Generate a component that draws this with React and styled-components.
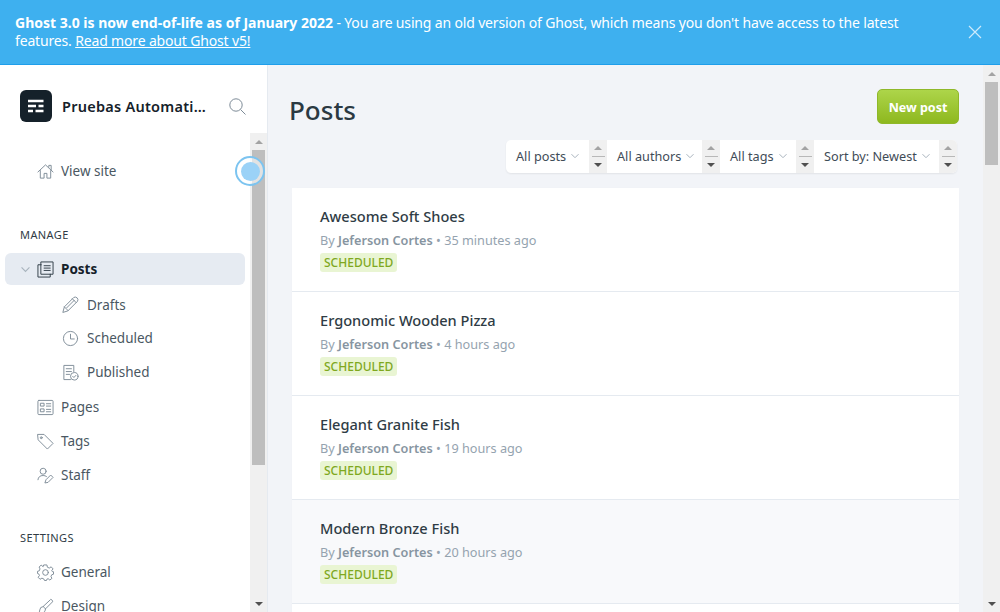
import React from 'react';
import styled, { createGlobalStyle } from 'styled-components';

const GlobalStyle = createGlobalStyle`
  html, body {
    margin: 0;
    padding: 0;
    height: 100%;
    overflow: hidden;
    background: #fff;
    font-family: "Noto Sans", "Open Sans", sans-serif;
  }
  #root { height: 100%; }
  * { box-sizing: border-box; }
`;

const Page = styled.div`
  width: 1000px;
  height: 612px;
  display: flex;
  flex-direction: column;
  overflow: hidden;
`;

const Banner = styled.div`
  height: 65px;
  flex: none;
  display: flex;
  align-items: flex-start;
  justify-content: space-between;
  padding: 14px 18px 0 15px;
  background: #3eb0ef;
  border-bottom: 1px solid #1f9eea;
  color: #fff;
  font-size: 14px;
  line-height: 18px;
`;

const BannerText = styled.div`
  width: 930px;
  letter-spacing: -0.16px;
  b { font-weight: 700; letter-spacing: 0; }
  a { color: #fff; text-decoration: underline; }
`;

const CloseButton = styled.svg`
  width: 14px;
  height: 14px;
  margin-top: 11px;
`;

const Body = styled.div`
  flex: 1;
  min-height: 0;
  display: flex;
`;

const Sidebar = styled.aside`
  width: 268px;
  flex: none;
  display: flex;
  flex-direction: column;
  background: #fff;
  border-right: 1px solid #e5eaf0;
  position: relative;
`;

const SideHeader = styled.div`
  height: 68px;
  flex: none;
  display: flex;
  align-items: flex-start;
  padding: 25px 20px 0 20px;
`;

const Logo = styled.svg`
  width: 32px;
  height: 32px;
  flex: none;
`;

const SiteName = styled.div`
  margin-left: 10px;
  width: 148px;
  font-size: 14.5px;
  line-height: 32px;
  font-weight: 600;
  letter-spacing: 0.25px;
  color: #15212a;
  white-space: nowrap;
  overflow: hidden;
  text-overflow: ellipsis;
`;

const SearchIcon = styled.svg`
  width: 17px;
  height: 17px;
  margin: 8px 0 0 19px;
  flex: none;
`;

const SideBody = styled.div`
  flex: 1;
  min-height: 0;
  display: flex;
`;

const Nav = styled.nav`
  flex: 1;
  min-width: 0;
  overflow: hidden;
  padding: 21px 5px 0 5px;
`;

const SectionLabel = styled.div`
  margin: ${({ $top }) => $top}px 0 0 15px;
  font-size: 11px;
  line-height: 16px;
  letter-spacing: 0.4px;
  color: #2f3b45;
  text-transform: uppercase;
`;

const NavRow = styled.div`
  display: flex;
  align-items: center;
  height: ${({ $h }) => $h || 34}px;
  margin-top: ${({ $top }) => $top || 0}px;
  padding-left: ${({ $sub }) => ($sub ? 57 : 32)}px;
  border-radius: 6px;
  font-size: 13.5px;
  color: #4a5762;
  ${({ $active }) =>
    $active &&
    `
    background: #e6ebf2;
    padding-left: 16px;
    color: #15212a;
    font-weight: 700;
  `}
  svg { flex: none; }
  svg + svg { margin-left: 7px; }
`;

const RowLabel = styled.span`
  margin-left: ${({ $gap }) => $gap || 7}px;
  letter-spacing: 0;
`;

const Track = styled.div`
  flex: none;
  width: 17px;
  display: flex;
  flex-direction: column;
  background: #f0f0f0;
`;

const TrackButton = styled.div`
  height: 17px;
  flex: none;
  display: flex;
  align-items: center;
  justify-content: center;
`;

const Arrow = styled.span`
  width: 0;
  height: 0;
  border-left: 4px solid transparent;
  border-right: 4px solid transparent;
  ${({ $dir, $dim }) =>
    $dir === 'up'
      ? `border-bottom: 4px solid ${$dim ? '#a3a3a3' : '#505050'};`
      : `border-top: 4px solid ${$dim ? '#a3a3a3' : '#505050'};`}
`;

const Thumb = styled.div`
  height: ${({ $h }) => $h}px;
  flex: none;
  background: #bebebe;
  margin: 0 2px;
`;

const TrackFill = styled.div`
  flex: 1;
`;

const Hotspot = styled.div`
  position: absolute;
  left: 235px;
  top: 91px;
  width: 30px;
  height: 30px;
  border-radius: 50%;
  border: 2px solid #7cc4f0;
  background: rgba(255, 255, 255, 0.55);
  display: flex;
  align-items: center;
  justify-content: center;
  &::after {
    content: '';
    width: 19px;
    height: 19px;
    border-radius: 50%;
    background: #9bd2f7;
  }
`;

const Main = styled.main`
  flex: 1;
  min-width: 0;
  display: flex;
  background: #f2f4f8;
`;

const Content = styled.div`
  flex: 1;
  min-width: 0;
  overflow: hidden;
  padding: 24px 24px 0 21px;
`;

const TitleRow = styled.div`
  display: flex;
  justify-content: space-between;
  align-items: flex-start;
`;

const Title = styled.h1`
  margin: 0;
  font-size: 26px;
  line-height: 42px;
  font-weight: 500;
  color: #2b3942;
`;

const NewButton = styled.button`
  width: 82px;
  height: 35px;
  padding: 1px 0 0 0;
  border: 1px solid #8fb82a;
  border-radius: 5px;
  background: linear-gradient(#add54a, #8eb81f);
  color: #fff;
  font-family: inherit;
  font-size: 12.5px;
  font-weight: 700;
`;

const Filters = styled.div`
  display: flex;
  justify-content: flex-end;
  margin: 9px 2px 0 0;
`;

const FilterBar = styled.div`
  display: flex;
  height: 33px;
  background: #fff;
  border-radius: 5px;
  overflow: hidden;
  box-shadow: 0 1px 2px rgba(0, 0, 0, 0.07);
`;

const Filter = styled.div`
  width: ${({ $w }) => $w}px;
  display: flex;
  align-items: center;
  padding: 0 0 2px 10px;
  font-size: 12.7px;
  color: #3f4c57;
  white-space: nowrap;
  svg { margin-left: 5px; }
`;

const Spin = styled.div`
  width: 18px;
  flex: none;
  display: flex;
  flex-direction: column;
  align-items: center;
  justify-content: center;
  background: #f0f0f0;
`;

const SpinPart = styled.div`
  height: 16px;
  width: 13px;
  display: flex;
  align-items: center;
  justify-content: center;
  ${({ $line }) => $line && 'border-bottom: 1px solid #b8b8b8;'}
`;

const PostList = styled.div`
  margin: 15px 0 0 3px;
  background: #fff;
  border-radius: 6px 6px 0 0;
  box-shadow: 0 0 1px rgba(0, 0, 0, 0.05);
`;

const PostRow = styled.div`
  height: 104px;
  padding: 18px 28px 0 28px;
  border-bottom: 1px solid #e5eaf0;
  background: ${({ $hover }) => ($hover ? '#f8f9fb' : '#fff')};
`;

const PostTitle = styled.div`
  font-size: 14.6px;
  line-height: 21px;
  font-weight: 500;
  color: #2f3c45;
`;

const PostMeta = styled.div`
  margin-top: 4px;
  font-size: 12.7px;
  line-height: 18px;
  color: #95a3af;
  b { font-weight: 600; color: #8795a1; }
`;

const Badge = styled.span`
  display: inline-block;
  margin-top: 4px;
  height: 19px;
  padding: 0 4px;
  border-radius: 3px;
  background: #e9f5d3;
  color: #7fa81e;
  font-size: 12px;
  font-weight: 500;
  line-height: 19px;
`;

const Icon = ({ children, size = 17, color = '#7d8b97' }) => (
  <svg
    width={size}
    height={size}
    viewBox="0 0 18 18"
    fill="none"
    stroke={color}
    strokeWidth="1"
    strokeLinecap="round"
    strokeLinejoin="round"
  >
    {children}
  </svg>
);

const Chevron = ({ size = 8, color = '#a8b3bd' }) => (
  <svg width={size} height={size} viewBox="0 0 8 8" fill="none" stroke={color} strokeWidth="1">
    <path d="M0.5 2.2 L4 5.7 L7.5 2.2" />
  </svg>
);

const posts = [
  { title: 'Awesome Soft Shoes', time: '35 minutes ago' },
  { title: 'Ergonomic Wooden Pizza', time: '4 hours ago' },
  { title: 'Elegant Granite Fish', time: '19 hours ago' },
  { title: 'Modern Bronze Fish', time: '20 hours ago', hover: true },
  { title: 'Sleek Steel Chair', time: '21 hours ago' },
];

const filters = [
  { label: 'All posts', w: 83 },
  { label: 'All authors', w: 95 },
  { label: 'All tags', w: 76 },
  { label: 'Sort by: Newest', w: 125 },
];

const App = () => (
  <Page>
    <GlobalStyle />
    <Banner>
      <BannerText>
        <b>Ghost 3.0 is now end-of-life as of January 2022</b> - You are using an old version of
        Ghost, which means you don't have access to the latest features.{' '}
        <a href="#v5">Read more about Ghost v5!</a>
      </BannerText>
      <CloseButton viewBox="0 0 14 14" fill="none" stroke="#cdeafb" strokeWidth="1.2">
        <path d="M1 1 L13 13 M13 1 L1 13" />
      </CloseButton>
    </Banner>
    <Body>
      <Sidebar>
        <SideHeader>
          <Logo viewBox="0 0 32 32">
            <rect width="32" height="32" rx="6" fill="#15212a" />
            <path
              d="M8 11 H23.5 M8 16 H16 M18.5 16 H23.5 M8 21 H13 M15.5 21 H23.5"
              stroke="#fff"
              strokeWidth="2.5"
            />
          </Logo>
          <SiteName>Pruebas Automatización</SiteName>
          <SearchIcon viewBox="0 0 17 17" fill="none" stroke="#7d8b97" strokeWidth="1">
            <circle cx="7" cy="7" r="6.2" />
            <path d="M11.6 11.6 L16.5 16.5" />
          </SearchIcon>
        </SideHeader>
        <SideBody>
          <Nav>
            <NavRow>
              <Icon>
                <path d="M1 9.5 L9 2 L17 9.5 M12.5 4.5 V2.5 H15 V7 M3.5 8 V16 H7.5 V11 H10.5 V16 H14.5 V8" />
              </Icon>
              <RowLabel>View site</RowLabel>
            </NavRow>
            <SectionLabel $top={39}>Manage</SectionLabel>
            <NavRow $active $h={32} $top={10}>
              <Chevron size={9} />
              <Icon color="#2f3b45">
                <path d="M4.5 1 H17 V14 H4.5 Z M4.5 4 H1 V17 H14 V14 M7.5 5 H14 M7.5 7.5 H14 M7.5 10 H14" />
              </Icon>
              <RowLabel>Posts</RowLabel>
            </NavRow>
            <NavRow $sub $h={33} $top={3}>
              <Icon>
                <path d="M1 17 L2.5 11.5 L12.5 1.5 Q14.5 0.5 16 2 Q17.5 3.5 16.5 5.5 L6.5 15.5 Z M11 3 L15 7 M2.5 11.5 L6.5 15.5 M5 12.5 L13 4.5" />
              </Icon>
              <RowLabel $gap={8}>Drafts</RowLabel>
            </NavRow>
            <NavRow $sub>
              <Icon>
                <circle cx="9" cy="9" r="7.5" />
                <path d="M9 4.5 V9.5 H13" />
              </Icon>
              <RowLabel $gap={8}>Scheduled</RowLabel>
            </NavRow>
            <NavRow $sub>
              <Icon>
                <path d="M9 16.5 H2 V1.5 H12.5 V8 M4.5 5 H10 M4.5 8 H10 M4.5 11 H8" />
                <circle cx="13" cy="13" r="4" />
                <path d="M11.3 13 L12.6 14.3 L14.8 12" />
              </Icon>
              <RowLabel $gap={8}>Published</RowLabel>
            </NavRow>
            <NavRow $top={1}>
              <Icon>
                <rect x="1" y="1.5" width="16" height="15" rx="1" />
                <path d="M4 4.5 H7.5 V7.5 H4 Z M4 10.5 H7.5 V13.5 H4 Z M10 5 H14.5 M10 7.5 H14.5 M10 11 H14.5 M10 13.5 H14.5" />
              </Icon>
              <RowLabel>Pages</RowLabel>
            </NavRow>
            <NavRow>
              <Icon>
                <path d="M1 1.5 H7.5 L17 11 L11 17 L1.5 7.5 Z" />
                <circle cx="4.5" cy="5" r="1" />
              </Icon>
              <RowLabel>Tags</RowLabel>
            </NavRow>
            <NavRow>
              <Icon>
                <circle cx="6.5" cy="4.5" r="3.2" />
                <path d="M1 13.5 Q1.5 9 6.5 9 Q8.5 9 10 10 M8.5 16.5 L9.5 13.5 L14.5 8.5 L17 11 L12 16 Z" />
              </Icon>
              <RowLabel>Staff</RowLabel>
            </NavRow>
            <SectionLabel $top={38}>Settings</SectionLabel>
            <NavRow $top={9}>
              <Icon>
                <circle cx="9" cy="9" r="3" />
                <path d="M7.5 1 H10.5 L11 3.4 L13 4.3 L15 3 L17 5.2 L15.6 7 L16.2 8 L17.5 8.2 V10.8 L15.6 11.4 L14.8 13.2 L15.8 15.2 L13.6 17 L11.8 15.6 L10.5 16 L10 17.5 H8 L7.2 15.8 L5.2 15 L3.2 16.2 L1.2 14 L2.6 12.2 L1.8 10.4 L0.5 10 V7.8 L2.4 7.2 L3.2 5.2 L2.2 3.2 L4.4 1.2 L6.2 2.6 Z" />
              </Icon>
              <RowLabel>General</RowLabel>
            </NavRow>
            <NavRow>
              <Icon>
                <path d="M15 1.5 Q17 2.5 16.5 4 L9 11.5 L6.5 9 L14 2 Z M6.5 9 Q3 9.5 3 12.5 Q3 15 1 16.5 Q6 17.5 8 14.5 Q9 13 9 11.5" />
              </Icon>
              <RowLabel>Design</RowLabel>
            </NavRow>
          </Nav>
          <Track>
            <TrackButton>
              <Arrow $dir="up" $dim />
            </TrackButton>
            <Thumb $h={315} />
            <TrackFill />
            <TrackButton>
              <Arrow $dir="down" />
            </TrackButton>
          </Track>
        </SideBody>
        <Hotspot />
      </Sidebar>
      <Main>
        <Content>
          <TitleRow>
            <Title>Posts</Title>
            <NewButton>New post</NewButton>
          </TitleRow>
          <Filters>
            <FilterBar>
              {filters.map((f) => (
                <React.Fragment key={f.label}>
                  <Filter $w={f.w}>
                    {f.label}
                    <Chevron />
                  </Filter>
                  <Spin>
                    <SpinPart $line>
                      <Arrow $dir="up" $dim />
                    </SpinPart>
                    <SpinPart>
                      <Arrow $dir="down" />
                    </SpinPart>
                  </Spin>
                </React.Fragment>
              ))}
            </FilterBar>
          </Filters>
          <PostList>
            {posts.map((p) => (
              <PostRow key={p.title} $hover={p.hover}>
                <PostTitle>{p.title}</PostTitle>
                <PostMeta>
                  By <b>Jeferson Cortes</b> • {p.time}
                </PostMeta>
                <Badge>SCHEDULED</Badge>
              </PostRow>
            ))}
          </PostList>
        </Content>
        <Track>
          <TrackButton>
            <Arrow $dir="up" $dim />
          </TrackButton>
          <Thumb $h={83} />
          <TrackFill />
          <TrackButton>
            <Arrow $dir="down" />
          </TrackButton>
        </Track>
      </Main>
    </Body>
  </Page>
);

export default App;
